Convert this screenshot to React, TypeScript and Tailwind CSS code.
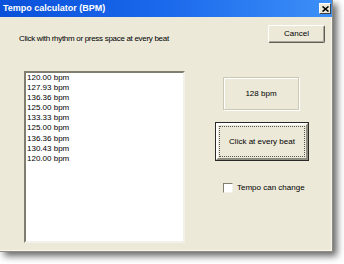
import React from 'react';

const font = { fontFamily: '"Liberation Sans", Arial, sans-serif' };

const readings = [
  '120.00 bpm',
  '127.93 bpm',
  '136.36 bpm',
  '125.00 bpm',
  '133.33 bpm',
  '125.00 bpm',
  '136.36 bpm',
  '130.43 bpm',
  '120.00 bpm',
];

// Кнопка в стиле Windows Classic
const ClassicButton: React.FC<{ label: string; className?: string }> = ({ label, className = '' }) => (
  <div
    className={`flex items-center justify-center bg-[#ece9d8] border border-t-white border-l-white border-r-[#5f5d54] border-b-[#5f5d54] shadow-[inset_-1px_-1px_0_#aca899] rounded-[2px] text-[8px] text-black ${className}`}
  >
    {label}
  </div>
);

export default function App() {
  return (
    <div className="w-[344px] h-[264px] bg-white overflow-hidden" style={font}>
      <div className="w-[333px] h-[252px] flex flex-col bg-[#ece9d8] border-r border-b border-r-[#8f8d80] border-b-[#8f8d80] shadow-[4px_4px_7px_rgba(0,0,0,0.6)]">
        {/* Заголовок окна */}
        <div className="h-[17px] flex items-center pl-[3px] pr-[1px] bg-gradient-to-r from-[#0a50da] via-[#1b69ec] to-[#3d8ff7]">
          <span className="text-[9px] font-bold text-white leading-none">Tempo calculator (BPM)</span>
          <div className="ml-auto w-[12px] h-[11px] flex items-center justify-center bg-[#ece9d8] border border-t-white border-l-white border-r-[#404040] border-b-[#404040]">
            <svg width="7" height="6" viewBox="0 0 7 6">
              <path d="M0.5 0.5 L6.5 5.5 M6.5 0.5 L0.5 5.5" stroke="#000" strokeWidth="1.6" />
            </svg>
          </div>
        </div>

        {/* Тело диалога */}
        <div className="flex-1 flex border-r border-b border-r-[#f7f6ee] border-b-[#f7f6ee]">
          <div className="w-[185px] flex flex-col pl-[19px]">
            <p className="mt-[17px] text-[8px] leading-[10px] tracking-[-0.3px] text-black whitespace-nowrap">
              Click with rhythm or press space at every beat
            </p>
            <div className="mt-[27px] ml-[5px] w-[161px] h-[172px] bg-white border-2 border-t-[#7f7d70] border-l-[#7f7d70] border-r-[#f2f1ea] border-b-[#f2f1ea] pl-[1px]">
              {readings.map((r, i) => (
                <div key={i} className="text-[8px] leading-[10.1px] text-black">
                  {r}
                </div>
              ))}
            </div>
          </div>

          <div className="flex-1 flex flex-col">
            <ClassicButton label="Cancel" className="mt-[8px] ml-[83px] w-[57px] h-[18px]" />

            <div className="mt-[34px] ml-[38px] w-[76px] h-[33px] flex items-center justify-center border border-[#cbc8b6] shadow-[inset_1px_1px_0_#fff,1px_1px_0_#fff] text-[8px] text-black">
              128 bpm
            </div>

            <div className="mt-[12px] ml-[30px] w-[94px] h-[39px] border border-[#2a2a2a] bg-[#ece9d8]">
              <div className="w-full h-full border-2 border-t-white border-l-white border-r-[#8f8d80] border-b-[#8f8d80] p-[1px]">
                <div className="w-full h-full border border-dotted border-[#555] flex items-center justify-center text-[8px] text-black">
                  Click at every beat
                </div>
              </div>
            </div>

            <div className="mt-[22px] ml-[38px] flex items-center">
              <div className="w-[10px] h-[10px] bg-white border border-t-[#7f7d70] border-l-[#7f7d70] border-r-[#f2f1ea] border-b-[#f2f1ea]" />
              <span className="ml-[4px] text-[8px] leading-[10px] text-black">Tempo can change</span>
            </div>
          </div>
        </div>
      </div>
    </div>
  );
}
